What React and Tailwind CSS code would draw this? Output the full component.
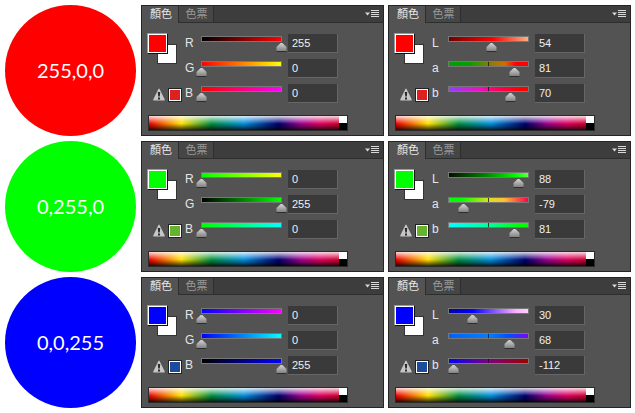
const rgbRed = [
  { label: "R", value: "255", pos: 80, grad: "bg-[linear-gradient(to_right,#000,#f00)]" },
  { label: "G", value: "0", pos: 0, grad: "bg-[linear-gradient(to_right,#f00,#ff0)]" },
  { label: "B", value: "0", pos: 0, grad: "bg-[linear-gradient(to_right,#f00,#f0f)]" },
];
const rgbGreen = [
  { label: "R", value: "0", pos: 0, grad: "bg-[linear-gradient(to_right,#0f0,#ff0)]" },
  { label: "G", value: "255", pos: 80, grad: "bg-[linear-gradient(to_right,#000,#0f0)]" },
  { label: "B", value: "0", pos: 0, grad: "bg-[linear-gradient(to_right,#0f0,#0ff)]" },
];
const rgbBlue = [
  { label: "R", value: "0", pos: 0, grad: "bg-[linear-gradient(to_right,#00f,#f0f)]" },
  { label: "G", value: "0", pos: 0, grad: "bg-[linear-gradient(to_right,#00f,#0ff)]" },
  { label: "B", value: "255", pos: 80, grad: "bg-[linear-gradient(to_right,#000,#00f)]" },
];
const labRed = [
  { label: "L", value: "54", pos: 43, grad: "bg-[linear-gradient(to_right,#700000,#f00_55%,#ffb080)]" },
  { label: "a", value: "81", pos: 66, tick: true, grad: "bg-[linear-gradient(to_right,#00a000_25%,#808000_50%,#d07000_70%,#f00_85%)]" },
  { label: "b", value: "70", pos: 62, tick: true, grad: "bg-[linear-gradient(to_right,#9040ff,#f010c0_40%,#ff0060_60%,#f00_90%)]" },
];
const labGreen = [
  { label: "L", value: "88", pos: 70, grad: "bg-[linear-gradient(to_right,#001000,#008000_45%,#0f0_85%,#60ff50)]" },
  { label: "a", value: "-79", pos: 15, tick: true, grad: "bg-[linear-gradient(to_right,#0f0_15%,#d8e020_50%,#ffc030_70%,#ff0050)]" },
  { label: "b", value: "81", pos: 66, tick: true, grad: "bg-[linear-gradient(to_right,#0ff,#00ff90_55%,#0f0_90%)]" },
];
const labBlue = [
  { label: "L", value: "30", pos: 24, grad: "bg-[linear-gradient(to_right,#0000a0,#0000ff_30%,#9060ff_60%,#ffb0ff_85%,#ffd0ff)]" },
  { label: "a", value: "68", pos: 61, tick: true, grad: "bg-[linear-gradient(to_right,#0060ff,#0080ff_50%,#0050ff_75%,#8000ff)]" },
  { label: "b", value: "-112", pos: 5, tick: true, grad: "bg-[linear-gradient(to_right,#0000ff,#800080_50%,#a00000)]" },
];

function Thumb({ pos }) {
  return (
    <svg className="absolute top-[6px] z-10" style={{ left: pos - 5 }} width="11" height="10" viewBox="0 0 11 10">
      <defs>
        <linearGradient id="thumbFill" x1="0" y1="0" x2="0" y2="1">
          <stop offset="0" stopColor="#d4d4d4" />
          <stop offset="1" stopColor="#7c7c7c" />
        </linearGradient>
      </defs>
      <path d="M4.6 1 H6.4 L10.5 5 V9.5 H0.5 V5 Z" fill="url(#thumbFill)" />
      <path d="M0.5 9.5 H10.5" stroke="#2e2e2e" strokeWidth="1" />
    </svg>
  );
}

function SliderRow({ row }) {
  return (
    <div className="flex h-[25px] items-start">
      <span className="mt-[2px] w-[16px] text-[12px] leading-[14px] text-[#e6e6e6]">{row.label}</span>
      <div className="relative mt-[2px] h-[6px] w-[81px]">
        <div className={`relative h-[6px] w-full border border-[#777] ${row.grad}`}>
          {row.tick && <div className="absolute left-[39px] top-0 h-full w-[1px] bg-black/70" />}
        </div>
        <Thumb pos={row.pos} />
      </div>
      <div className="ml-[6px] flex h-[19px] w-[50px] items-center border-r border-b border-[#666] bg-[#3a3a3a] pl-[4px] text-[11px] text-[#f0f0f0]">
        {row.value}
      </div>
    </div>
  );
}

function WarnIcon() {
  return (
    <svg width="12" height="13" viewBox="0 0 12 13">
      <path d="M6 1.2 L11.2 11.8 H0.8 Z" fill="#c8c8c8" stroke="#c8c8c8" strokeWidth="1.2" strokeLinejoin="round" />
      <path d="M4.8 4 H7.2 L6.8 8.5 H5.2 Z M5 9.5 H7 V11.5 H5 Z" fill="#2b2b2b" />
    </svg>
  );
}

function MenuIcon() {
  return (
    <svg width="14" height="8" viewBox="0 0 14 8">
      <path d="M0 2.5 H5 L2.5 5.5 Z" fill="#d8d8d8" />
      <path d="M6 0.5 H14 M6 2.5 H14 M6 4.5 H14 M6 6.5 H14" stroke="#d8d8d8" strokeWidth="1" />
    </svg>
  );
}

function Panel({ fg, warn, rows }) {
  return (
    <div className="flex h-[131px] w-[243px] flex-col border border-[#252525] bg-[#535353]">
      <div className="flex h-[17px] items-stretch border-b border-[#2e2e2e] bg-[#3d3d3d]">
        <div className="-mb-[1px] flex w-[36px] items-center justify-center bg-[#535353] pl-[2px] text-[11px] text-[#e8e8e8]">顏色</div>
        <div className="flex w-[36px] items-center justify-center border-r border-l border-[#2e2e2e] bg-[#464646] pl-[1px] text-[11px] text-[#9a9a9a]">色票</div>
        <div className="ml-auto mr-[4px] flex items-center">
          <MenuIcon />
        </div>
      </div>
      <div className="flex pl-[5px] pt-[11px]">
        <div className="-mt-[1px] w-[38px]">
          <div className="relative h-[31px] w-[30px]">
            <div className="absolute left-0 top-0 z-10 h-[21px] w-[21px] border border-t-[#9a9a9a] border-l-[#9a9a9a] border-r-[#111] border-b-[#111]">
              <div className={`h-full w-full border border-white ${fg}`} />
            </div>
            <div className="absolute bottom-0 right-0 h-[20px] w-[20px] border border-[#333] bg-white" />
          </div>
          <div className="ml-[6px] mt-[24px] flex items-start gap-[3px]">
            <WarnIcon />
            <div className="h-[14px] w-[14px] border border-[#222]">
              <div className={`h-full w-full border border-white ${warn}`} />
            </div>
          </div>
        </div>
        <div>
          {rows.map((row) => (
            <SliderRow key={row.label} row={row} />
          ))}
        </div>
      </div>
      <div className="ml-[6px] mt-[6px] flex h-[16px] w-[200px] border border-[#2a2a2a]">
        <div className="flex-1 bg-[linear-gradient(to_bottom,rgba(255,255,255,0.85)_0%,rgba(255,255,255,0)_55%,rgba(0,0,0,0)_55%,rgba(0,0,0,0.8)_100%),linear-gradient(to_right,#f00000_0%,#ffe000_17%,#009040_33%,#0090e0_50%,#000070_68%,#a00090_80%,#e00060_90%,#d00030_100%)]" />
        <div className="flex w-[8px] flex-col">
          <div className="flex-1 bg-white" />
          <div className="flex-1 bg-black" />
        </div>
      </div>
    </div>
  );
}

function Circle({ color, text }) {
  return (
    <div className={`flex h-[131px] w-[131px] shrink-0 items-center justify-center rounded-full pb-[2px] font-['Lato',sans-serif] text-[20px] font-normal text-white ${color}`}>
      {text}
    </div>
  );
}

export default function App() {
  return (
    <div
      className="flex h-[413px] w-[635px] flex-col gap-[5px] bg-white pl-[5px] pt-[5px]"
      style={{ fontFamily: '"Liberation Sans", "Noto Sans CJK TC", sans-serif' }}
    >
      <div className="flex">
        <Circle color="bg-[#ff0000]" text="255,0,0" />
        <div className="ml-[5px] flex gap-[4px]">
          <Panel fg="bg-[#ff0000]" warn="bg-[#e01f1f]" rows={rgbRed} />
          <Panel fg="bg-[#ff0000]" warn="bg-[#e01f1f]" rows={labRed} />
        </div>
      </div>
      <div className="flex">
        <Circle color="bg-[#00ff00]" text="0,255,0" />
        <div className="ml-[5px] flex gap-[4px]">
          <Panel fg="bg-[#00ff00]" warn="bg-[#66b32e]" rows={rgbGreen} />
          <Panel fg="bg-[#00ff00]" warn="bg-[#66b32e]" rows={labGreen} />
        </div>
      </div>
      <div className="flex">
        <Circle color="bg-[#0000ff]" text="0,0,255" />
        <div className="ml-[5px] flex gap-[4px]">
          <Panel fg="bg-[#0000ff]" warn="bg-[#1a4b9c]" rows={rgbBlue} />
          <Panel fg="bg-[#0000ff]" warn="bg-[#1a4b9c]" rows={labBlue} />
        </div>
      </div>
    </div>
  );
}
